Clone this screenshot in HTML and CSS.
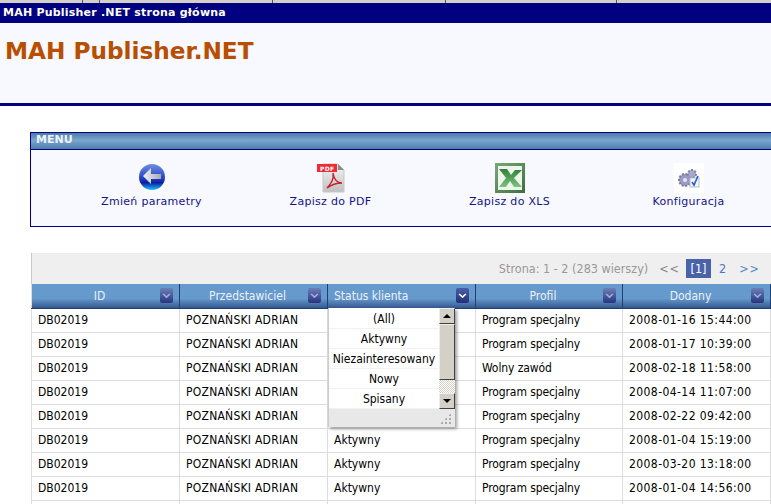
FILE: index.html
```html
<!DOCTYPE html>
<html lang="pl">
<head>
<meta charset="utf-8">
<title>MAH Publisher .NET strona główna</title>
<link rel="stylesheet" href="styles.css">
</head>
<body>
<div class="topstrip"></div>
<div class="titlebar">MAH Publisher .NET strona główna</div>
<header class="banner"><h1>MAH Publisher.NET</h1></header>
<main class="content">
  <section class="menu">
    <div class="menu-head">MENU</div>
    <div class="menu-body">
      <a class="menu-item">
        <svg width="30" height="30" viewBox="0 0 30 30"><defs><linearGradient id="g1" x1="0" y1="0" x2="0" y2="1"><stop offset="0" stop-color="#6f8fe0"/><stop offset=".5" stop-color="#2a4ccc"/><stop offset=".72" stop-color="#0a1fa0"/><stop offset="1" stop-color="#1cc0fa"/></linearGradient><linearGradient id="g2" x1="0" y1="0" x2="1" y2="0"><stop offset="0" stop-color="#f4f4f6"/><stop offset="1" stop-color="#a8a8b4"/></linearGradient></defs><circle cx="15" cy="14" r="13" fill="url(#g1)"/><path d="M14 5 L6 13 L14 21 L14 16 L24 16 L24 11 L14 11 Z" fill="url(#g2)"/></svg>
        <span>Zmień parametry</span>
      </a>
      <a class="menu-item">
        <svg width="30" height="30" viewBox="0 0 30 30"><defs><linearGradient id="g3" x1="0" y1="0" x2="0" y2="1"><stop offset="0" stop-color="#f6f6f6"/><stop offset="1" stop-color="#c0c0c0"/></linearGradient></defs><path d="M7 1 H22 L28 7 V29 H7 Z" fill="url(#g3)" stroke="#c8c8c8"/><path d="M22 1 V7 H28 Z" fill="#8a8a8a"/><rect x="1" y="1" width="20" height="8" fill="#ee2b36"/><text x="4" y="7.500" class="pdf-label">PDF</text><path d="M11 25 C16 20 18 15 17 10 C18 16 21 20 26 20 C21 20 15 22 11 25 Z" fill="none" stroke="#c8202a" stroke-width="1.400"/></svg>
        <span>Zapisz do PDF</span>
      </a>
      <a class="menu-item">
        <svg width="30" height="30" viewBox="0 0 30 30"><defs><linearGradient id="g4" x1="0" y1="0" x2="1" y2="1"><stop offset="0" stop-color="#7aa87a"/><stop offset="1" stop-color="#3d6f3d"/></linearGradient><linearGradient id="g5" x1="0" y1="0" x2="0" y2="1"><stop offset="0" stop-color="#2f7f3a"/><stop offset="1" stop-color="#7cc47c"/></linearGradient></defs><rect width="30" height="30" fill="url(#g4)"/><rect x="3" y="3" width="24" height="24" fill="#eef5ea"/><path d="M4 6 H12 L16 12 L20 7 H27 L19 15 L27 24 H19 L15 18 L11 24 H4 L11 15 Z" fill="url(#g5)"/></svg>
        <span>Zapisz do XLS</span>
      </a>
      <a class="menu-item">
        <svg width="30" height="30" viewBox="0 0 30 30"><rect width="30" height="30" fill="#fff"/><circle cx="11" cy="17" r="6" fill="#9a9ac4" stroke="#7a7aa4" stroke-dasharray="2 1.500" stroke-width="2"/><circle cx="11" cy="17" r="2" fill="#e4e4f0"/><circle cx="18" cy="11" r="4" fill="#a8a8cc" stroke="#8484ac" stroke-dasharray="2 1.500" stroke-width="2"/><rect x="16" y="15" width="9" height="9" fill="#f4f6fc" stroke="#b8bcd0"/><path d="M18 19 L20 22 L24 13" fill="none" stroke="#1f5fd0" stroke-width="1.600"/></svg>
        <span>Konfiguracja</span>
      </a>
    </div>
  </section>

  <section class="grid-wrap">
    <div class="pager">
      <span class="pager-info">Strona: 1 - 2 (283 wierszy)</span>
      <a class="pager-nav">&lt;&lt;</a>
      <span class="pager-cur">[1]</span>
      <a class="pager-link">2</a>
      <a class="pager-nav blue">&gt;&gt;</a>
    </div>
    <table class="grid">
      <colgroup><col class="c1"><col class="c2"><col class="c3"><col class="c4"><col class="c5"></colgroup>
      <thead>
        <tr>
          <th><span class="h-label">ID</span><i class="fbtn"></i></th>
          <th><span class="h-label">Przedstawiciel</span><i class="fbtn"></i></th>
          <th class="left"><span class="h-label">Status klienta</span><i class="fbtn on"></i></th>
          <th><span class="h-label">Profil</span><i class="fbtn"></i></th>
          <th><span class="h-label">Dodany</span><i class="fbtn"></i></th>
        </tr>
      </thead>
      <tbody>
        <tr><td>DB02019</td><td>POZNAŃSKI ADRIAN</td><td></td><td>Program specjalny</td><td>2008-01-16 15:44:00</td></tr>
        <tr><td>DB02019</td><td>POZNAŃSKI ADRIAN</td><td></td><td>Program specjalny</td><td>2008-01-17 10:39:00</td></tr>
        <tr><td>DB02019</td><td>POZNAŃSKI ADRIAN</td><td></td><td>Wolny zawód</td><td>2008-02-18 11:58:00</td></tr>
        <tr><td>DB02019</td><td>POZNAŃSKI ADRIAN</td><td></td><td>Program specjalny</td><td>2008-04-14 11:07:00</td></tr>
        <tr><td>DB02019</td><td>POZNAŃSKI ADRIAN</td><td></td><td>Program specjalny</td><td>2008-02-22 09:42:00</td></tr>
        <tr><td>DB02019</td><td>POZNAŃSKI ADRIAN</td><td>Aktywny</td><td>Program specjalny</td><td>2008-01-04 15:19:00</td></tr>
        <tr><td>DB02019</td><td>POZNAŃSKI ADRIAN</td><td>Aktywny</td><td>Program specjalny</td><td>2008-03-20 13:18:00</td></tr>
        <tr><td>DB02019</td><td>POZNAŃSKI ADRIAN</td><td>Aktywny</td><td>Program specjalny</td><td>2008-01-04 14:56:00</td></tr>
        <tr><td>&nbsp;</td><td></td><td></td><td></td><td></td></tr>
      </tbody>
    </table>
    <div class="dropdown">
      <div class="dd-main">
        <ul class="dd-list">
          <li>(All)</li><li>Aktywny</li><li>Niezainteresowany</li><li>Nowy</li><li>Spisany</li>
        </ul>
        <div class="dd-scroll">
          <div class="sb-btn"><b class="up"></b></div>
          <div class="sb-thumb"></div>
          <div class="sb-track"></div>
          <div class="sb-btn"><b class="down"></b></div>
        </div>
      </div>
      <div class="dd-foot"><span class="grip"></span></div>
    </div>
  </section>
</main>
</body>
</html>
```
FILE: styles.css
```css
html, body { margin: 0; padding: 0; height: 504px; overflow: hidden; background: #fff; }
body { font-family: "DejaVu Sans Condensed", "DejaVu Sans", sans-serif; font-size: 12px; color: #000; }

.topstrip { height: 3px; background-color: #d4d0c8; background-image: linear-gradient(90deg, #555, #555), linear-gradient(90deg, #555, #555), linear-gradient(90deg, #555, #555), linear-gradient(90deg, #555, #555), linear-gradient(90deg, #555, #555); background-size: 1px 100%; background-repeat: no-repeat; background-position: 82px 0, 99px 0, 272px 0, 445px 0, 616px 0; }
.titlebar { height: 20px; background: #000080; color: #fff; font: bold 11px/20px "DejaVu Sans", sans-serif; letter-spacing: .22px; padding-left: 3px; }
.banner { height: 80px; background: #f8f8ff; border-bottom: 3px solid #000080; }
.banner h1 { margin: 0; padding: 12px 0 0 5px; font: bold 23.200px/32px "DejaVu Sans", sans-serif; color: #b84e00; }

.content { padding: 26px 0 0 30px; }

.menu { border: 1px solid #000080; border-right: 0; height: 93px; background: #f8f8ff; }
.menu-head { height: 16px; border-bottom: 1px solid #000080; background: linear-gradient(#4c7ba8, #7aa6cf 45%, #4f7eab); color: #eef3fa; font: bold 11px/14px "DejaVu Sans", sans-serif; padding-left: 5px; }
.menu-body { display: grid; grid-template-columns: repeat(4, 179px); padding: 13px 0 0 31px; }
.menu-item { display: flex; flex-direction: column; align-items: center; color: #14148c; font: 11px/14px "DejaVu Sans", sans-serif; letter-spacing: .3px; }
.menu-item svg { display: block; }
.menu-item span { margin-top: 2px; white-space: nowrap; }
.pdf-label { font: bold 6px "DejaVu Sans", sans-serif; fill: #fff; }

.grid-wrap { position: relative; margin: 26px 0 0 1px; }
.pager { height: 31px; background: #efefef; border-left: 1px solid #c8c8c8; box-sizing: border-box; display: flex; align-items: center; justify-content: flex-end; padding: 0 11px 0 0; color: #999; font-size: 12.500px; }
.pager-info { margin-right: 11px; }
.pager-nav { color: #888; margin-right: 6px; letter-spacing: 1px; }
.pager-nav.blue { color: #5b86c4; margin-right: 0; margin-left: 13px; }
.pager-cur { background: #4a62a8; color: #fff; padding: 2px 4.500px; height: 15px; line-height: 15px; }
.pager-link { color: #4a78c0; margin-left: 8px; }

.grid { border-collapse: collapse; table-layout: fixed; width: 740px; border-left: 1px solid #ddd; }
.c1, .c2, .c3, .c5 { width: 148px; }
.c4 { width: 147px; }
.grid th { height: 24px; padding: 0; box-sizing: border-box; position: relative; font-weight: normal; color: #eaf0f8; text-align: center; background: linear-gradient(#6699cc 0, #6699cc 60%, #34578f 100%); border-right: 1px solid #1f3f78; border-bottom: 1px solid #1f3f78; }
.grid th.left { text-align: left; padding-left: 6px; }
.h-label { position: relative; left: -6px; display: inline-block; }
.grid th.left .h-label { left: 0; }
.fbtn { position: absolute; right: 6px; top: 4px; width: 13px; height: 15px; border-radius: 2px; background: linear-gradient(#6d7fb8, #27357f); }
.fbtn::after { content: ""; position: absolute; left: 3px; top: 3px; width: 5px; height: 5px; border-right: 2px solid #9fb2d8; border-bottom: 2px solid #9fb2d8; transform: scale(.8, .7) rotate(45deg); }
.fbtn.on { background: linear-gradient(#4a5fa8, #232f7c); }
.fbtn.on::after { border-color: #fff; }
.grid td { height: 24px; padding: 0 0 0 6px; box-sizing: border-box; border-right: 1px solid #ddd; border-bottom: 1px solid #ddd; white-space: nowrap; overflow: hidden; }
.grid td:nth-child(2) { letter-spacing: .25px; }
.grid td:nth-child(4) { letter-spacing: -.1px; }
.grid td:nth-child(5) { letter-spacing: .42px; }

.dropdown { position: absolute; left: 297px; top: 55px; width: 126px; background: #fff; box-shadow: 2px 2px 3px rgba(80, 80, 80, .55); border-left: 1px solid #ccc; }
.dd-main { display: flex; height: 101px; }
.dd-list { list-style: none; margin: 0; padding: 1px 0 0; flex: 1; min-width: 0; }
.dd-list li { height: 20px; line-height: 20px; text-align: center; border-bottom: 1px solid #f2f2f2; box-sizing: border-box; white-space: nowrap; }
.dd-scroll { width: 16px; flex: none; display: flex; flex-direction: column; background: repeating-conic-gradient(#d4d0c8 0 25%, #fff 0 50%) 0 0 / 2px 2px; }
.sb-btn { height: 16px; background: #d4d0c8; box-sizing: border-box; border: 1px solid; border-color: #f0eee8 #404040 #404040 #f0eee8; display: flex; align-items: center; justify-content: center; flex: none; }
.sb-btn b { width: 0; height: 0; border-left: 4px solid transparent; border-right: 4px solid transparent; }
.sb-btn b.up { border-bottom: 4px solid #000; }
.sb-btn b.down { border-top: 4px solid #000; }
.sb-thumb { height: 56px; background: #d4d0c8; box-sizing: border-box; border: 1px solid; border-color: #f0eee8 #404040 #404040 #f0eee8; flex: none; }
.sb-track { flex: 1; }
.dd-foot { height: 18px; background: #e8e8e8; position: relative; }
.grip { position: absolute; right: 4px; bottom: 3px; width: 11px; height: 11px; background: radial-gradient(circle, #aaa 1px, transparent 1.200px) 0 0 / 4px 4px; clip-path: polygon(100% 0, 100% 100%, 0 100%); }
```
